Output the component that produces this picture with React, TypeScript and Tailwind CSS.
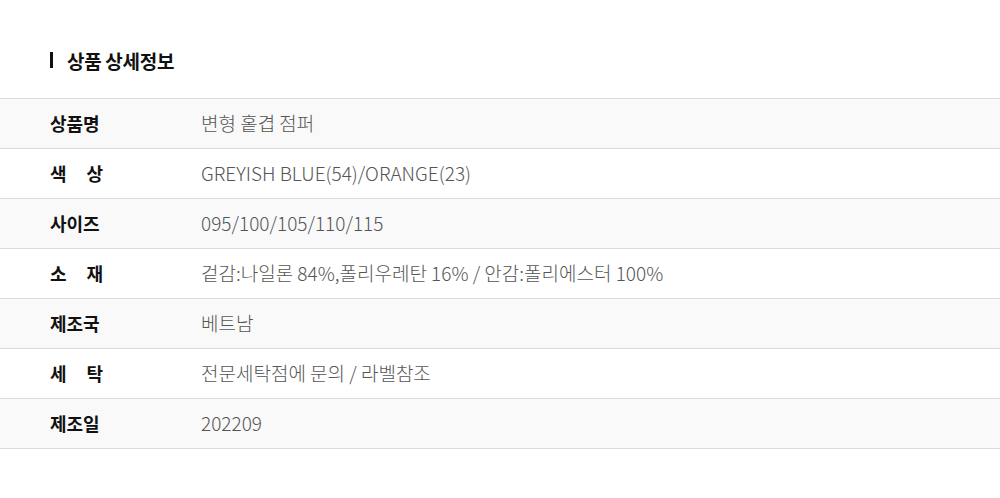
const rows: { label: string[]; value: string }[] = [
  { label: ['상품명'], value: '변형 홑겹 점퍼' },
  { label: ['색', '상'], value: 'GREYISH BLUE(54)/ORANGE(23)' },
  { label: ['사이즈'], value: '095/100/105/110/115' },
  { label: ['소', '재'], value: '겉감:나일론 84%,폴리우레탄 16% / 안감:폴리에스터 100%' },
  { label: ['제조국'], value: '베트남' },
  { label: ['세', '탁'], value: '전문세탁점에 문의 / 라벨참조' },
  { label: ['제조일'], value: '202209' },
]

export default function App() {
  return (
    <div
      className="w-[1000px] h-[498px] bg-white pt-[48px]"
      style={{ fontFamily: '"Noto Sans CJK KR", "Noto Sans", sans-serif' }}
    >
      {/* Title */}
      <div className="flex items-center gap-[14px] pl-[50px] h-[24px]">
        <span className="block w-[3px] h-[16px] bg-[#111]" />
        <h2 className="text-[19px] font-bold text-[#111] leading-none tracking-[-0.3px]">상품 상세정보</h2>
      </div>

      {/* Table */}
      <div className="mt-[26px] border-t border-[#dcdcdc]">
        {rows.map((r, i) => (
          <div
            key={i}
            className={`flex items-center h-[50px] border-b border-[#dcdcdc] ${i % 2 === 0 ? 'bg-[#f9f9f9]' : 'bg-white'}`}
          >
            <div className="w-[201px] shrink-0 pl-[50px]">
              <div className="flex justify-between w-[53px] text-[18px] font-bold text-[#111]">
                {r.label.map((l) => (
                  <span key={l}>{l}</span>
                ))}
              </div>
            </div>
            <div className="text-[19px] font-light text-[#555]">{r.value}</div>
          </div>
        ))}
      </div>
    </div>
  )
}
